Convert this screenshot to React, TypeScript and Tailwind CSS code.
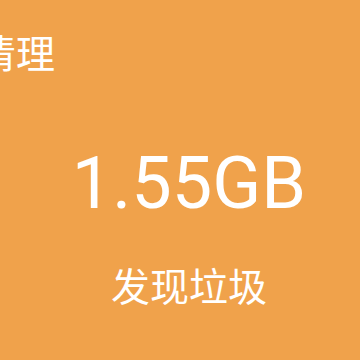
import React from 'react';

const App = () => {
  return (
    <div className="w-[360px] h-[360px] overflow-hidden bg-[#f0a24b] text-white font-['Roboto','Noto_Sans_CJK_SC',sans-serif]">
      <div className="ml-[-23px] pt-[30px] text-[39px] leading-[50px]">清理</div>
      <div className="flex flex-col items-center pl-[18px]">
        <div className="mt-[62px] text-[72px] leading-[84px]">1.55GB</div>
        <div className="mt-[37px] text-[39px] leading-[50px]">发现垃圾</div>
      </div>
    </div>
  );
};

export default App;
